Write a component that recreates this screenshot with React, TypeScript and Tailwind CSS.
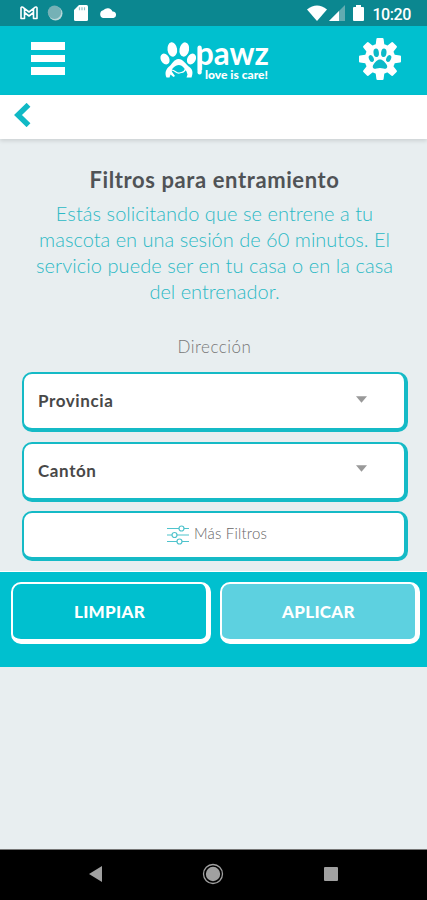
import type { ReactNode } from 'react'

const intro = [
  { text: 'Estás solicitando que se entrene a tu', tracking: 'tracking-[0.06px]' },
  { text: 'mascota en una sesión de 60 minutos. El', tracking: 'tracking-[0.01px]' },
  { text: 'servicio puede ser en tu casa o en la casa', tracking: 'tracking-[0.06px]' },
  { text: 'del entrenador.', tracking: 'tracking-[0px]' },
]

function StatusBar() {
  return (
    <div className="flex h-[26px] items-center justify-between bg-[#0b8790] pr-4 pl-5 text-white">
      <div className="flex items-center">
        <svg width="18" height="14" viewBox="0 0 18 14" fill="none" stroke="currentColor" strokeWidth="1.6" strokeLinejoin="round">
          <path d="M1 12.500V1.800Q1.500.6 3 1.300L9 6l6-4.700q1.500-.7 2 .5v10.700h-3.500V6.500L9 10 4.500 6.500v6zM4.500 2.500v4M13.500 2.500v4" />
        </svg>
        <svg width="16" height="16" viewBox="0 0 16 16" className="ml-[9px]">
          <circle cx="8.500" cy="8.500" r="7" fill="#b9d8da" />
          <circle cx="7.500" cy="7.300" r="6.700" fill="#75b1b6" />
        </svg>
        <svg width="14" height="16" viewBox="0 0 14 16" className="ml-[11px]">
          <path d="M5 0h7.500Q14 0 14 1.500v13q0 1.500-1.500 1.500h-11Q0 16 0 14.500V5z" fill="currentColor" />
          <path d="M5.500 2.300v3M8 2.300v3M10.500 2.300v3" stroke="#8cc3c7" strokeWidth="1.200" />
        </svg>
        <svg width="18" height="12" viewBox="0 0 18 12" className="ml-[11px]" fill="currentColor">
          <path d="M4 11a4 4 0 0 1 .2-7.700A5.500 5.500 0 0 1 13.500 4.500 3.300 3.300 0 0 1 14.500 11z" />
        </svg>
      </div>
      <div className="flex items-center">
        <svg width="20" height="16" viewBox="0 0 20 16" fill="currentColor">
          <path d="M0 4.500Q10-3.500 20 4.500L10 16z" />
        </svg>
        <svg width="16" height="16" viewBox="0 0 16 16" className="ml-[2px]">
          <path d="M16 0v16H0z" fill="#62acb1" />
          <path d="M10 6v10H0z" fill="currentColor" />
        </svg>
        <svg width="11" height="16" viewBox="0 0 11 16" className="ml-[8px]" fill="currentColor">
          <path d="M3 0h5v2h2q1 0 1 1v12q0 1-1 1H1q-1 0-1-1V3q0-1 1-1h2z" />
        </svg>
        <span className="mt-[3px] ml-[8px] font-[Roboto] text-[16px] leading-none font-medium tracking-[-0.4px]">10:20</span>
      </div>
    </div>
  )
}

function Logo() {
  return (
    <svg width="112" height="46" viewBox="0 0 112 46" fill="#fff" className="overflow-visible">
      <ellipse cx="12.300" cy="10.500" rx="4.800" ry="7.200" transform="rotate(-8 12.300 10.500)" />
      <ellipse cx="24.300" cy="10.500" rx="4.800" ry="7.200" transform="rotate(10 24.300 10.500)" />
      <ellipse cx="5" cy="20" rx="4.200" ry="5.800" transform="rotate(-28 5 20)" />
      <ellipse cx="31.500" cy="20" rx="4.200" ry="5.800" transform="rotate(28 31.500 20)" />
      <path d="M18.500 20C14 20 12 25.500 8.500 28 5 31.500 5 35 6.500 38.500h3l1-3 3 2.500 1.500-1-2.500-3.500c-1-1.500-1-3 .5-4.500 4-4 8-4 11 0l2.500 3.500 1 3-1 3h5c1.500-4 1.500-7.500-1.500-10C25.500 25 23 20 18.500 20z" />
      <path d="M11.500 31c4 0 4.500 4 8 3s5-.5 6-4" fill="none" stroke="#fff" strokeWidth="1.200" />
      <text x="36" y="26" textLength="73" lengthAdjust="spacingAndGlyphs" fontFamily="Lato" fontWeight="700" fontSize="33">
        pawz
      </text>
      <path d="M39.600 8.500V33.500" stroke="#fff" strokeWidth="4.200" strokeLinecap="round" />
      <text x="45" y="40" textLength="63" lengthAdjust="spacingAndGlyphs" fontFamily="Lato" fontWeight="900" fontSize="11.500">
        love is care!
      </text>
    </svg>
  )
}

function PawGear() {
  return (
    <svg width="42" height="42" viewBox="-21 -21 42 42">
      <g fill="#fff">
        <circle r="15.300" />
        {[0, 45, 90, 135, 180, 225, 270, 315].map((a) => (
          <path key={a} d="M-4.500-13-3.600-20Q-3.500-21-2.500-21h5Q3.500-21 3.600-20L4.500-13z" transform={`rotate(${a})`} />
        ))}
      </g>
      <g fill="#0bbac8">
        <ellipse cx="-3.800" cy="-6.300" rx="2.700" ry="4.300" transform="rotate(-6 -3.800 -6.300)" />
        <ellipse cx="3.800" cy="-6.300" rx="2.700" ry="4.300" transform="rotate(6 3.800 -6.300)" />
        <ellipse cx="-8.700" cy="-.5" rx="2.300" ry="3.600" transform="rotate(-25 -8.700 -.5)" />
        <ellipse cx="8.700" cy="-.5" rx="2.300" ry="3.600" transform="rotate(25 8.700 -.5)" />
        <path d="M0 .5C3 .5 4.500 3 6.300 5.200 8.500 8 6.500 10.500 3.500 9.500Q0 8.500-3.500 9.500C-6.500 10.500-8.500 8-6.300 5.200-4.500 3-3 .5 0 .5z" />
      </g>
    </svg>
  )
}

function Header() {
  return (
    <header className="flex h-[69px] items-start justify-between bg-[#00c0cf] pr-[26px] pl-[31px]">
      <div className="mt-[16px] flex w-[34px] flex-col gap-[5px]">
        <span className="h-[8px] bg-white" />
        <span className="h-[7px] bg-white" />
        <span className="h-[8px] bg-white" />
      </div>
      <div className="mt-[13px] ml-[7px]">
        <Logo />
      </div>
      <div className="mt-[12px]">
        <PawGear />
      </div>
    </header>
  )
}

function Select({ label }: { label: string }) {
  return (
    <div className="flex h-[60px] items-center justify-between rounded-[10px] border-2 border-r-4 border-b-4 border-[#15bac6] bg-white pr-[37px] pl-[14px]">
      <span className="mb-[1px] text-[17px] leading-none font-bold tracking-[0.6px] text-[#484848]">{label}</span>
      <svg width="11" height="7" viewBox="0 0 12 7" className="mb-[4px]">
        <path d="M0 0h12L6 7z" fill="#999" />
      </svg>
    </div>
  )
}

function Sliders() {
  return (
    <svg width="22" height="20" viewBox="0 0 22 20" fill="none" stroke="#4fc3cc" strokeWidth="1.200">
      <path d="M0 3.500h12M17 3.500h5M0 10h5M10 10h12M0 16.500h10M15 16.500h7" />
      <circle cx="14.500" cy="3.500" r="2.500" />
      <circle cx="7.500" cy="10" r="2.500" />
      <circle cx="12.500" cy="16.500" r="2.500" />
    </svg>
  )
}

function Action({ children, className }: { children: ReactNode; className: string }) {
  return (
    <button
      className={`flex h-[62px] items-center justify-center rounded-[10px] border-2 border-r-[5px] border-b-[5px] border-white text-[17px] leading-none font-black tracking-[0.3px] text-white ${className}`}
    >
      {children}
    </button>
  )
}

export default function App() {
  return (
    <div className="flex h-[900px] w-[427px] flex-col overflow-hidden bg-[#e8eef0] font-[Lato,sans-serif]">
      <StatusBar />
      <Header />
      <div className="flex h-[44px] shrink-0 items-center bg-white pl-[14px] shadow-[0_2px_4px_rgba(0,0,0,0.12)]">
        <svg width="18" height="24" viewBox="0 0 18 24" className="mb-[4px]" fill="none" stroke="#10b9c5" strokeWidth="5.500">
          <path d="M14.500 1.800 4 12l10.500 10.200" />
        </svg>
      </div>

      <main className="flex h-[432px] shrink-0 flex-col pr-[20px] pl-[22px]">
        <h1 className="mt-[27px] text-center text-[22px] leading-[28px] font-bold tracking-[0.6px] whitespace-nowrap text-[#505356]">
          Filtros para entramiento
        </h1>
        <p className="mt-[6px] text-center text-[20px] leading-[26px] font-light whitespace-nowrap text-[#2cb9c5]">
          {intro.map((l) => (
            <span key={l.text} className={`block ${l.tracking}`}>
              {l.text}
            </span>
          ))}
        </p>
        <p className="mt-[31px] text-center text-[17px] leading-[24px] font-light tracking-[0.5px] text-[#777]">Dirección</p>
        <div className="mt-[13px] -mr-px flex flex-col gap-[9.500px]">
          <Select label="Provincia" />
          <Select label="Cantón" />
          <div className="flex h-[50px] items-center justify-center gap-[5px] rounded-[10px] border-2 border-r-4 border-b-4 border-[#15bac6] bg-white pl-[6px]">
            <Sliders />
            <span className="mb-[3px] text-[15px] leading-none font-light tracking-[0.2px] text-[#666]">Más Filtros</span>
          </div>
        </div>
      </main>

      <div className="flex h-[96px] shrink-0 gap-[9px] border-t border-white bg-[#00c0cf] pt-[10px] pr-[7px] pl-[11px]">
        <Action className="w-[200px]">LIMPIAR</Action>
        <Action className="w-[200px] bg-[#5dd1e0]">APLICAR</Action>
      </div>

      <nav className="mt-auto flex h-[51px] shrink-0 items-center justify-between border-t border-[#777] bg-black pr-[89px] pl-[89px]">
        <svg width="13" height="16" viewBox="0 0 13 16" className="mb-[2px]">
          <path d="M13 0v16L0 8z" fill="#a0a0a0" />
        </svg>
        <svg width="22" height="22" viewBox="0 0 22 22" className="mb-[2px]">
          <circle cx="11" cy="11" r="9.500" fill="none" stroke="#a0a0a0" strokeWidth="1.300" />
          <circle cx="11" cy="11" r="7.200" fill="#a0a0a0" />
        </svg>
        <span className="mb-[2px] h-[14px] w-[14px] rounded-[1px] bg-[#a0a0a0]" />
      </nav>
    </div>
  )
}
